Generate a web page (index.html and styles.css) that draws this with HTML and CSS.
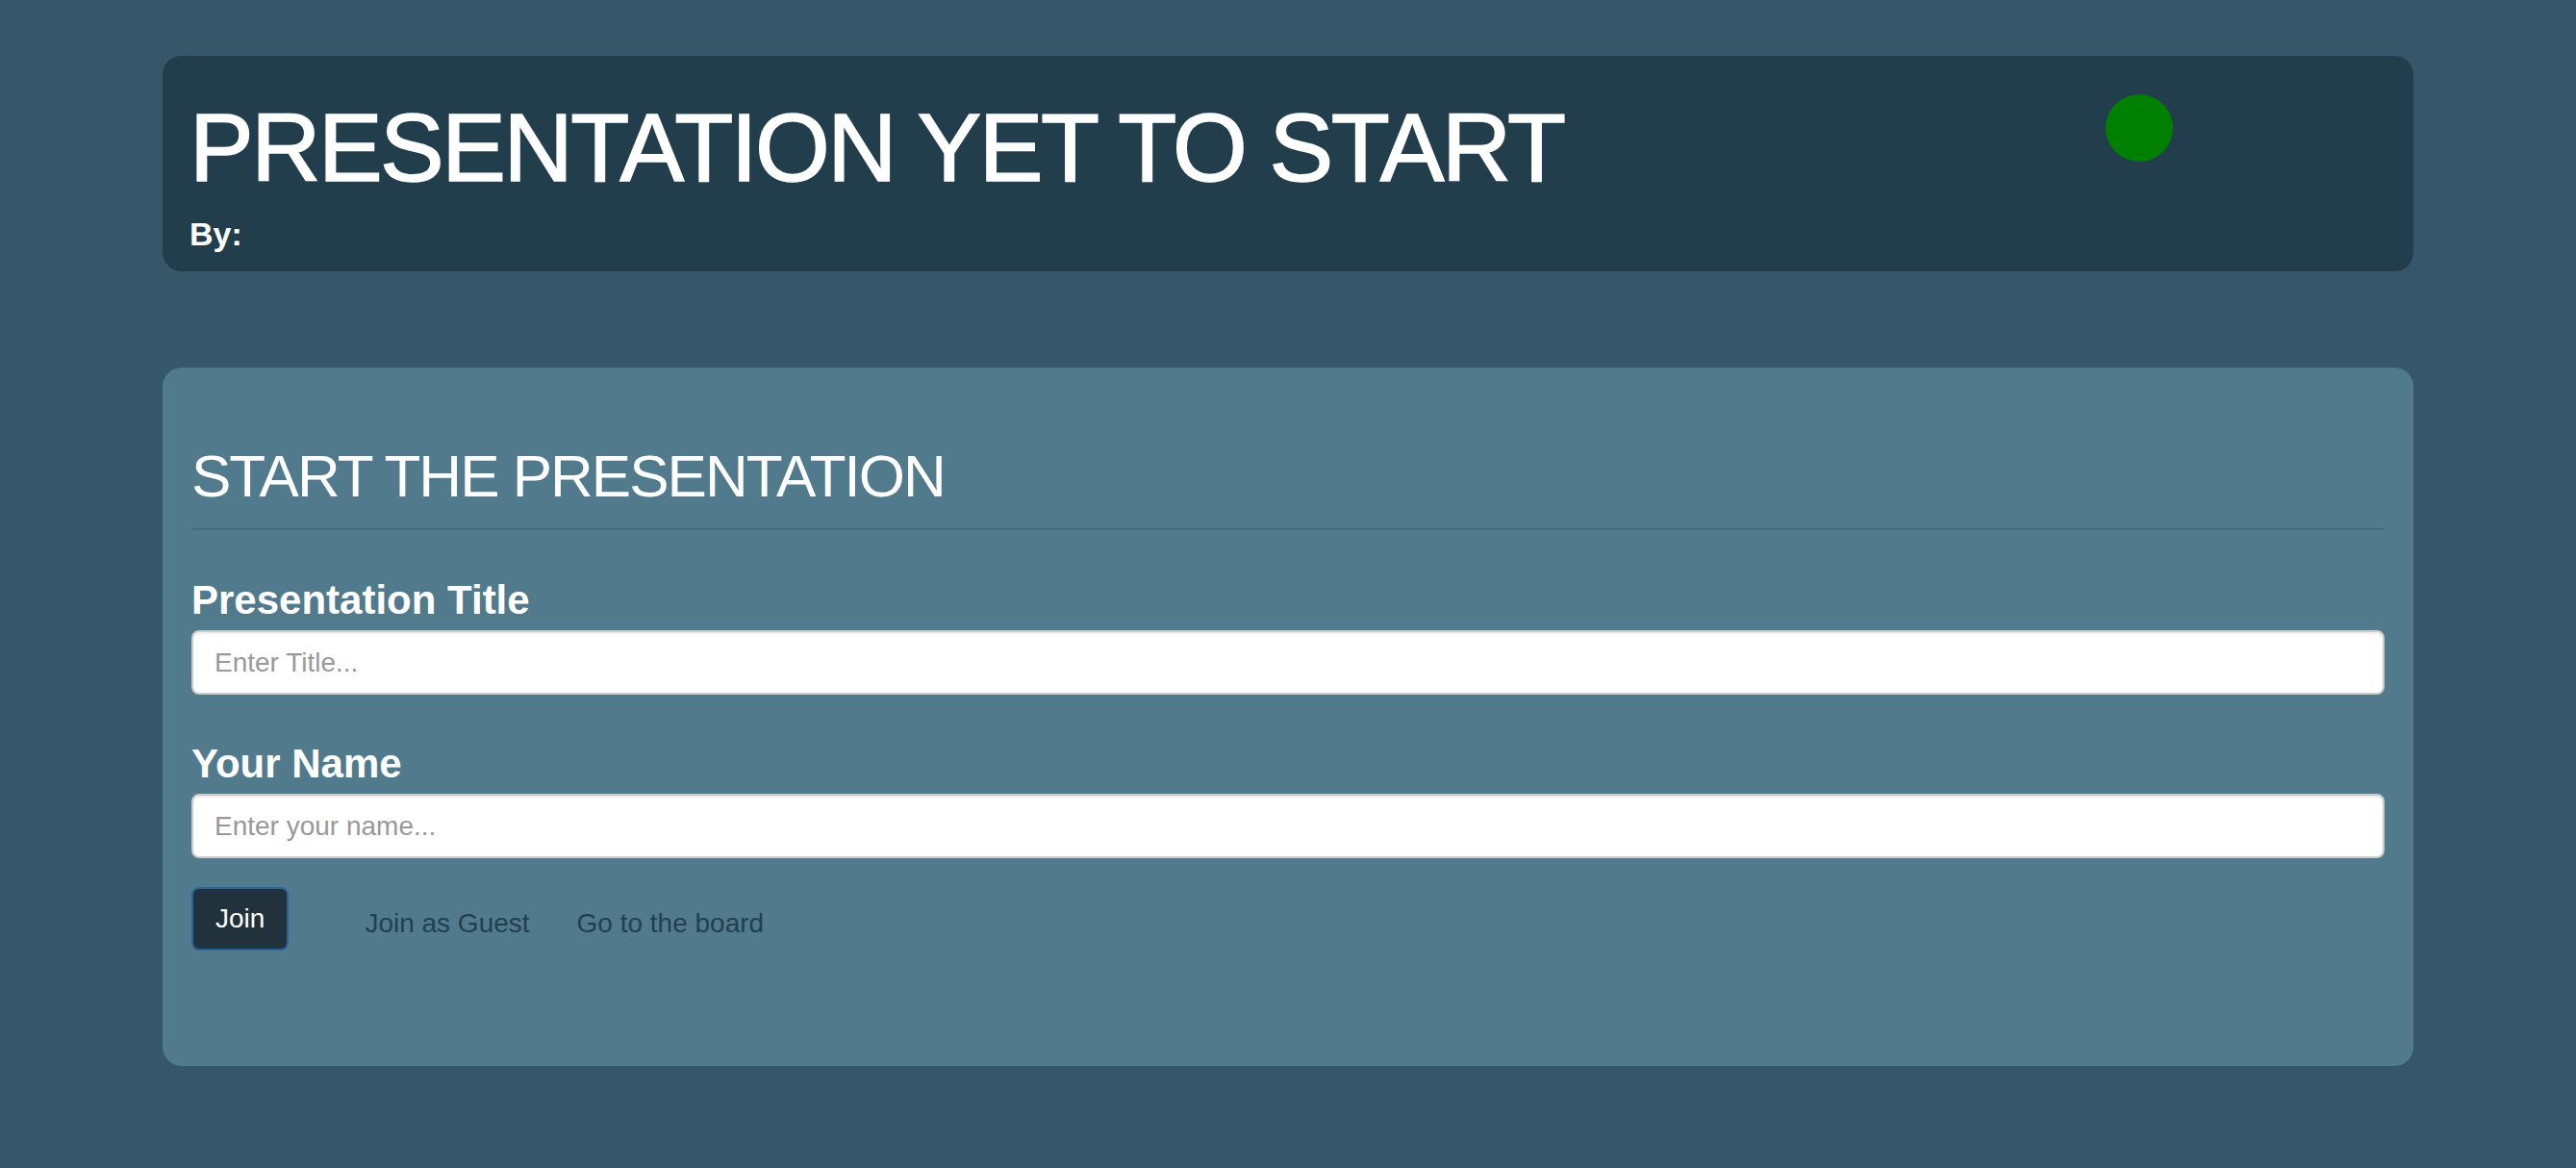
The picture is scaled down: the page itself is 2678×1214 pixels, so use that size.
FILE: index.html
```html
<!DOCTYPE html>
<html lang="en">
<head>
<meta charset="utf-8">
<title>Presentation yet to start</title>
<link rel="stylesheet" href="styles.css">
</head>
<body>
  <div class="page">
    <header class="hero">
      <div class="hero-text">
        <h1 class="hero-title">PRESENTATION YET TO START</h1>
        <div class="hero-by">By:</div>
      </div>
      <div class="status-dot"></div>
    </header>

    <section class="panel">
      <h2 class="panel-title">START THE PRESENTATION</h2>
      <form class="panel-form">
        <div class="form-group">
          <label class="form-label" for="title">Presentation Title</label>
          <input class="form-input" id="title" type="text" placeholder="Enter Title...">
        </div>
        <div class="form-group">
          <label class="form-label" for="name">Your Name</label>
          <input class="form-input" id="name" type="text" placeholder="Enter your name...">
        </div>
        <div class="form-actions">
          <button class="btn-join" type="button">Join</button>
          <div class="action-links">
            <a class="action-link" href="#">Join as Guest</a>
            <a class="action-link" href="#">Go to the board</a>
          </div>
        </div>
      </form>
    </section>
  </div>
</body>
</html>
```

FILE: styles.css
```css
html, body {
  margin: 0;
  padding: 0;
}

body {
  background: #355769;
  font-family: "Liberation Sans", Arial, Helvetica, sans-serif;
  color: #ffffff;
  min-height: 1214px;
}

.page {
  width: 2340px;
  margin: 0 auto;
  padding-top: 58px;
}

.hero {
  display: flex;
  justify-content: space-between;
  align-items: flex-start;
  background: #223d4b;
  border-radius: 20px;
  padding: 40px 250px 22px 28px;
  height: 224px;
  box-sizing: border-box;
}

.hero-text {
  display: flex;
  flex-direction: column;
}

.hero-title {
  margin: 5px 0 0 0;
  font-size: 100px;
  line-height: 1;
  font-weight: 400;
  letter-spacing: -2.5px;
  color: #ffffff;
  -webkit-text-stroke: 1.5px #ffffff;
}

.hero-by {
  margin-top: 23px;
  font-size: 34px;
  line-height: 1;
  font-weight: 700;
}

.status-dot {
  width: 70px;
  height: 70px;
  border-radius: 50%;
  background: #008000;
}

.panel {
  margin-top: 100px;
  background: #517a8d;
  border-radius: 20px;
  padding: 30px 30px 0 30px;
  height: 726px;
  box-sizing: border-box;
}

.panel-title {
  margin: 52px 0 52px 0;
  padding-bottom: 23px;
  border-bottom: 2px solid #456d80;
  font-size: 62px;
  line-height: 1;
  font-weight: 400;
  letter-spacing: -2px;
  color: #ffffff;
}

.form-group {
  margin-bottom: 51px;
}

.form-label {
  display: block;
  margin-bottom: 10px;
  font-size: 42px;
  line-height: 1;
  font-weight: 700;
  color: #ffffff;
}

.form-input {
  display: block;
  width: 100%;
  height: 67px;
  box-sizing: border-box;
  padding: 0 22px;
  border: 2px solid #cccccc;
  border-radius: 8px;
  background: #ffffff;
  box-shadow: inset 0 2px 2px rgba(0, 0, 0, 0.075);
  font-family: "Liberation Sans", Arial, Helvetica, sans-serif;
  font-size: 28px;
  color: #555555;
  outline: none;
}

.form-input::placeholder {
  color: #999999;
}

.form-actions {
  display: flex;
  align-items: flex-start;
  margin-top: -21px;
}

.btn-join {
  height: 66px;
  padding: 0 23px;
  border: 2px solid #2b6298;
  border-radius: 8px;
  background: #22323c;
  color: #ffffff;
  font-family: "Liberation Sans", Arial, Helvetica, sans-serif;
  font-size: 28px;
  line-height: 1;
  cursor: pointer;
}

.action-links {
  display: flex;
  gap: 49px;
  margin-left: 79px;
  margin-top: 18px;
}

.action-link {
  font-size: 28px;
  line-height: 40px;
  color: #23404f;
  text-decoration: none;
}
```
